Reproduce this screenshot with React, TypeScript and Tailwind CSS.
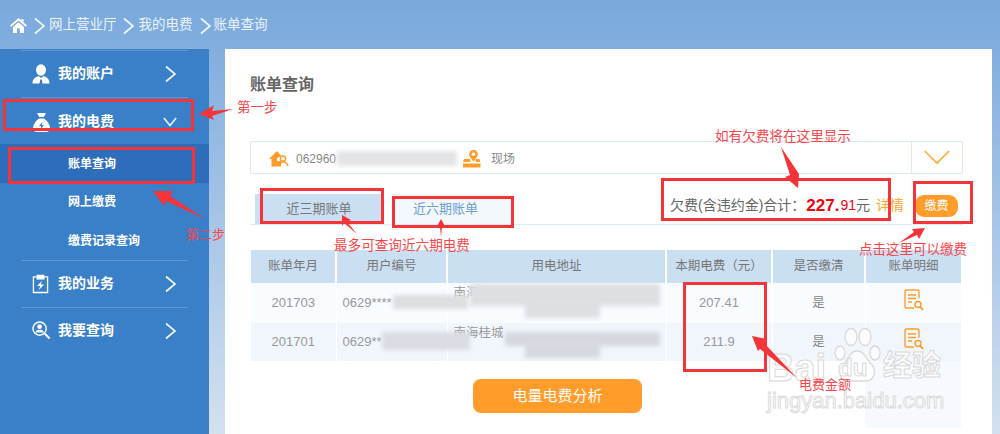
import React from "react";

const Chevron = ({ cls = "w-[11px] h-[18px]", color = "#eef5fc" }: { cls?: string; color?: string }) => (
  <svg viewBox="0 0 11 18" className={cls} fill="none" stroke={color} strokeWidth="1.7"><path d="M1 1.5 L10 9 L1 16.5" /></svg>
);
const ChevronDown = () => (
  <svg viewBox="0 0 16 11" className="w-[14px] h-[10px] -ml-[2px]" fill="none" stroke="#eef5fc" strokeWidth="1.7"><path d="M1 1 L8 9.5 L15 1" /></svg>
);

const IconPerson = () => (
  <svg viewBox="0 0 18 20" className="w-[18px] h-[20px]" fill="#fff">
    <ellipse cx="9" cy="6" rx="5" ry="5.7" />
    <path d="M0.5 19.5 C0.5 15 3 13 6.5 12 L9 14 L11.5 12 C15 13 17.5 15 17.5 19.5 L10.5 19.5 L9.8 15.5 H8.2 L7.5 19.5 Z" />
  </svg>
);
const IconBag = () => (
  <svg viewBox="0 0 19 20" className="w-[19px] h-[20px]">
    <path fill="#fff" d="M5 1 L14 1 L11.8 5 L7.2 5 Z" />
    <path fill="#fff" d="M7 6.5 H12 C15.5 9 18 12.5 18 16 C18 18.5 16.5 20 14 20 H5 C2.5 20 1 18.5 1 16 C1 12.5 3.5 9 7 6.5 Z" />
    <path fill="#3a80c9" d="M10.5 9.5 L7 14.3 H9.3 L8.3 18 L12 13 H9.8 Z" />
  </svg>
);
const IconClip = () => (
  <svg viewBox="0 0 18 20" className="w-[17px] h-[20px]" fill="none" stroke="#fff" strokeWidth="1.4">
    <path d="M5 2.5 H1.5 V19 H16.5 V2.5 H13" />
    <path d="M5.5 1 H12.5 V4.5 H5.5 Z" fill="#fff" />
    <path d="M10.5 6.5 L5.5 12 H8.8 L7 16.5 L12.8 10.5 H9.4 Z" fill="#fff" stroke="none" />
  </svg>
);
const IconSearchUser = () => (
  <svg viewBox="0 0 20 20" className="w-[19px] h-[19px]">
    <circle cx="8" cy="8" r="7" fill="none" stroke="#fff" strokeWidth="1.5" />
    <circle cx="8" cy="6" r="2.5" fill="#fff" />
    <path d="M3.5 12 C4 9.8 6 9.2 8 9.2 C10 9.2 12 9.8 12.5 12 Z" fill="#fff" />
    <path d="M13.5 13.5 L18.5 18.5" stroke="#fff" strokeWidth="2.2" />
  </svg>
);
const IconHouseUser = () => (
  <svg viewBox="0 0 20 16" className="w-[20px] h-[16px]">
    <path fill="#ff9c2a" d="M8 0 L0 8 H2.5 V15.5 H12 V10 H8 V7.5 C9 6 11 5.5 12.6 5.2 Z" />
    <circle cx="14" cy="7.5" r="2.6" fill="none" stroke="#ff9c2a" strokeWidth="1.5" />
    <path d="M10 15 C10.5 12 12 11 14 11 C16 11 18 12 19 15" fill="none" stroke="#ff9c2a" strokeWidth="1.5" />
  </svg>
);
const IconLocation = () => (
  <svg viewBox="0 0 18 18" className="w-[18px] h-[18px]">
    <path fill="#ff9c2a" d="M1 9 H7 L7.5 12 H0 Z M0 13.5 H17.5 V17.5 H0 Z M13 9 H16.5 L17.2 12 H12.5 Z" />
    <path fill="#ff9c2a" d="M10.5 0 C7.8 0 6.2 2 6.2 4.3 C6.2 7 10.5 11.5 10.5 11.5 C10.5 11.5 14.8 7 14.8 4.3 C14.8 2 13.2 0 10.5 0 Z" />
    <circle cx="10.5" cy="4.3" r="1.8" fill="#fff" />
  </svg>
);
const IconBill = () => (
  <svg viewBox="0 0 20 22" className="w-[20px] h-[22px]" fill="none" stroke="#ff9c2a" strokeWidth="1.4">
    <path d="M10 19 H2.5 C1.5 19 1 18.5 1 17.5 V2.5 C1 1.5 1.5 1 2.5 1 H13.5 C14.5 1 15 1.5 15 2.5 V9.5" />
    <path d="M4 6 H12 M4 9.5 H12 M4 13 H8" />
    <circle cx="14" cy="15.5" r="3" />
    <path d="M16.2 17.8 L19 20.8" strokeWidth="1.8" />
  </svg>
);
const IconHome = () => (
  <svg viewBox="0 0 17 15" className="w-[17px] h-[15px]" fill="#fff">
    <path d="M8.5 0 L0 7.5 L1.2 8.8 L8.5 2.5 L15.8 8.8 L17 7.5 L13.5 4.4 V1 H11.5 V2.6 Z" />
    <path d="M3 9 L8.5 4.2 L14 9 V15 H10 V10.5 H7 V15 H3 Z" />
  </svg>
);

const nav = (label: string, icon: React.ReactNode, down = false, cls = "") => (
  <div className={`h-[47px] flex items-center relative shrink-0 ${cls}`}>
    <div className="absolute left-[21px] right-[21px] top-0 h-px bg-[#5d97d6]" />
    <div className="w-[58px] pl-[32px] flex items-center">{icon}</div>
    <span className="text-[14px] font-bold text-white w-[107px]">{label}</span>
    {down ? <ChevronDown /> : <Chevron />}
  </div>
);

const RedBox = ({ cls }: { cls: string }) => <div className={`absolute border-[3px] border-[#f43438] ${cls}`} />;
const Note = ({ cls, children }: { cls: string; children: React.ReactNode }) => (
  <div className={`absolute text-[#f8474b] whitespace-nowrap leading-none ${cls}`}>{children}</div>
);
const Smudge = ({ cls }: { cls: string }) => <div className={`absolute blur-[2px] ${cls}`} />;

const rows = [
  { m: "201703", id: "0629****", addr: "南海桂", fee: "207.41" },
  { m: "201701", id: "0629**", addr: "南海桂城", fee: "211.9" },
];

export default function App() {
  return (
    <div className="relative w-[1000px] h-[434px] overflow-hidden bg-gradient-to-b from-[#78a8dc] to-[#d3e1ef] [font-family:'Liberation_Sans','Noto_Sans_CJK_SC',sans-serif]">
      <header className="h-[49px] flex items-center pl-[10px] pt-[2px] text-[13.5px] text-[#eaf2fb]">
        <IconHome />
        <span className="ml-[7px] mr-[4px]"><Chevron /></span>
        <span>网上营业厅</span>
        <span className="ml-[6px] mr-[5px]"><Chevron /></span>
        <span>我的电费</span>
        <span className="ml-[7px] mr-[3px]"><Chevron /></span>
        <span>账单查询</span>
      </header>
      <div className="flex h-[385px]">
        <aside className="w-[209px] bg-[#3a80c9] flex flex-col pt-[1px]">
          {nav("我的账户", <IconPerson />)}
          {nav("我的电费", <IconBag />, true, "pt-[2px]")}
          <div className="text-[12px] font-bold text-white">
            <div className="h-[39px] bg-[#2e6dba] flex items-center pl-[68px]">账单查询</div>
            <div className="h-[38px] flex items-center pl-[68px]">网上缴费</div>
            <div className="h-[39px] flex items-center pl-[68px]">缴费记录查询</div>
          </div>
          {nav("我的业务", <IconClip />)}
          {nav("我要查询", <IconSearchUser />)}
        </aside>
        <main className="ml-[16px] w-[767px] bg-white pl-[25px] pr-[29px] flex flex-col">
          <h1 className="mt-[27px] text-[16px] leading-[18px] font-bold text-[#666]">账单查询</h1>
          <div className="mt-[47px] h-[33px] w-[713px] border border-[#dce8f5] rounded-[2px] flex items-center">
            <div className="flex-1 flex items-center pl-[18px] pt-[2px] text-[12px] text-[#888]">
              <IconHouseUser />
              <span className="ml-[7px] w-[167px]">062960</span>
              <IconLocation />
              <span className="ml-[10px]">现场</span>
            </div>
            <div className="w-[51px] h-full border-l border-[#dce8f5] flex items-center justify-center">
              <svg viewBox="0 0 28 16" className="w-[28px] h-[15px]" fill="none" stroke="#ffa733" strokeWidth="1.6"><path d="M1 1 L14 14 L27 1" /></svg>
            </div>
          </div>
          <div className="mt-[20px] h-[31px] w-[713px] border-b border-[#dfe9f5] flex items-stretch relative">
            <div className="ml-[5px] w-[128px] bg-[#cbdff3] flex items-center justify-center text-[13px] text-[#777]">近三期账单</div>
            <div className="ml-[9px] w-[121px] bg-[#f3f8fd] flex items-center justify-center pr-[14px] text-[13px] text-[#6d9fd3]">近六期账单</div>
            <div className="ml-auto flex items-center text-[14px] text-[#666] pb-[7px]">
              <span>欠费(含违约金)合计：</span>
              <span className="text-[#f0000f] font-bold text-[17px] ml-[1px]">227.</span>
              <span className="text-[#f0000f] ml-[1px]">91</span>
              <span>元</span>
              <span className="text-[#ffa733] ml-[6px]">详情</span>
              <span className="ml-[11px] mr-[5px] w-[43px] h-[22px] rounded-[9px] bg-[#ff9c2a] text-white text-[12px] flex items-center justify-center">缴费</span>
            </div>
          </div>
          <div className="ml-[1px] flex-1 flex flex-col w-[710px]">
            <table className="mt-[25px] w-[710px] table-fixed border-collapse text-[12.5px] text-[#999] text-center">
              <colgroup>
                <col className="w-[85px]" /><col className="w-[111px]" /><col className="w-[219px]" /><col className="w-[106px]" /><col className="w-[93px]" /><col className="w-[96px]" />
              </colgroup>
              <thead>
                <tr className="h-[33px] bg-[#cbdff3] text-[#777]">
                  {["账单年月", "用户编号", "用电地址", "本期电费（元）", "是否缴清", "账单明细"].map((h) => (
                    <th key={h} className="font-normal border-r-2 border-white last:border-r-0 p-0 whitespace-nowrap">{h}</th>
                  ))}
                </tr>
              </thead>
              <tbody>
                {rows.map((r, i) => (
                  <tr key={r.m} className={i === 0 ? "h-[40px] bg-[#f8fbff]" : "h-[38px] bg-[#f1f6fd]"}>
                    <td className="border-r border-white p-0 text-[13px]">{r.m}</td>
                    <td className="border-r border-white p-0 text-left pl-[6px] text-[13px]">{r.id}</td>
                    <td className="border-r border-white p-0 text-left pl-[6px] align-top pt-[1px]">{r.addr}</td>
                    <td className="border-r border-white p-0 text-[13px]">{r.fee}</td>
                    <td className="border-r border-white p-0 text-[#888]">是</td>
                    <td className="p-0"><div className="flex justify-center pb-[6px] pl-[2px]"><IconBill /></div></td>
                  </tr>
                ))}
              </tbody>
            </table>
            <div className="relative flex-1">
              <div className="absolute right-0 top-0 w-[96px] h-[67px] bg-[#f6f9fd]" />
              <div className="absolute left-[222px] top-[18px] w-[169px] h-[34px] rounded-[8px] bg-[#ff9c2a] text-white text-[15px] flex items-center justify-center">电量电费分析</div>
            </div>
          </div>
        </main>
      </div>

      <Smudge cls="left-[337px] top-[151px] w-[120px] h-[15px] bg-[#e3e4e5]" />
      <Smudge cls="left-[393px] top-[295px] w-[75px] h-[14px] bg-[#dcdee0]" />
      <Smudge cls="left-[470px] top-[284px] w-[190px] h-[22px] bg-[#dddfe2]" />
      <Smudge cls="left-[525px] top-[300px] w-[75px] h-[18px] bg-[#dddfe2]" />
      <Smudge cls="left-[382px] top-[332px] w-[88px] h-[18px] bg-[#d9dce1]" />
      <Smudge cls="left-[505px] top-[332px] w-[155px] h-[14px] bg-[#d5d8de]" />
      <Smudge cls="left-[525px] top-[344px] w-[75px] h-[14px] bg-[#d5d8de]" />

      <div className="absolute left-[767px] top-[349px] text-[38px] leading-none font-bold text-white/70 [-webkit-text-stroke:1px_#d9d9d9]">Bai</div>
      <svg viewBox="0 0 48 56" className="absolute left-[833px] top-[327px] w-[48px] h-[56px]" fill="#fff" fillOpacity="0.6" stroke="#d9d9d9" strokeWidth="1.3">
        <ellipse cx="7" cy="26" rx="5" ry="7" />
        <ellipse cx="18" cy="10" rx="6" ry="8.5" />
        <ellipse cx="32" cy="10" rx="6" ry="8.5" />
        <ellipse cx="42" cy="26" rx="5" ry="7" />
        <path d="M24 24 C32 24 33 33 39 38 C44 44 41 54 33 54 H15 C7 54 4 44 10 38 C16 33 16 24 24 24 Z" />
      </svg>
      <div className="absolute left-[838px] top-[356px] text-[24px] leading-none font-bold text-white/70 [-webkit-text-stroke:1px_#d9d9d9]">du</div>
      <div className="absolute left-[883px] top-[352px] text-[29px] leading-none font-bold text-white/70 [-webkit-text-stroke:1px_#d9d9d9]">经验</div>
      <div className="absolute left-[767px] top-[390px] text-[22px] leading-none text-white/70 [-webkit-text-stroke:1px_#dcdcdc]">jingyan.baidu.com</div>

      <RedBox cls="left-[3px] top-[99px] w-[191px] h-[32px]" />
      <RedBox cls="left-[8px] top-[147px] w-[187px] h-[37px]" />
      <RedBox cls="left-[260px] top-[188px] w-[124px] h-[36px]" />
      <RedBox cls="left-[392px] top-[196px] w-[122px] h-[32px]" />
      <RedBox cls="left-[661px] top-[178px] w-[230px] h-[43px]" />
      <RedBox cls="left-[913px] top-[181px] w-[60px] h-[43px]" />
      <RedBox cls="left-[683px] top-[282px] w-[84px] h-[90px]" />

      <svg className="absolute left-0 top-0 w-[1000px] h-[434px] pointer-events-none" viewBox="0 0 1000 434" fill="#f43438">
        <path d="M199 114 L214 105 L212 111 L233 109 L212 116 L214 120 Z" />
        <path d="M153 191 L173 191 L170 196 L205 219 L166 201 L164 206 Z" />
        <path d="M342 215 L351 220 L347 222 L357 234 L344 223 L342 226 Z" />
        <path d="M441 219 L446 228 L442 227 L441 237 L440 227 L436 228 Z" />
        <path d="M781 147 L799 174 L798 188 L785 177 L790 175 Z" />
        <path d="M925 228 L919 239 L917 235 L899 243 L914 232 L912 229 Z" />
        <path d="M752 336 L767 339 L765 344 L797 378 L760 349 L758 351 Z" />
      </svg>

      <Note cls="left-[237px] top-[101px] text-[13.5px]">第一步</Note>
      <Note cls="left-[186px] top-[228px] text-[13px]">第二步</Note>
      <Note cls="left-[334px] top-[239px] text-[13.6px]">最多可查询近六期电费</Note>
      <Note cls="left-[715px] top-[130px] text-[13.6px]">如有欠费将在这里显示</Note>
      <Note cls="left-[859px] top-[243px] text-[13.5px]">点击这里可以缴费</Note>
      <Note cls="left-[799px] top-[378px] text-[13px]">电费金额</Note>
    </div>
  );
}
